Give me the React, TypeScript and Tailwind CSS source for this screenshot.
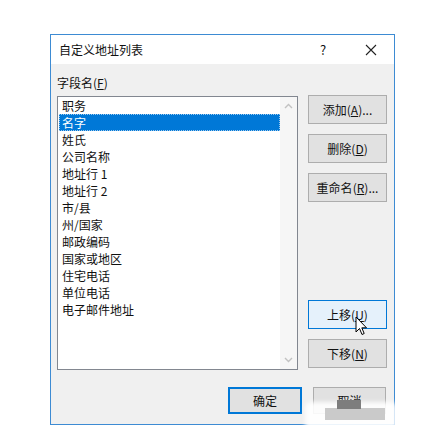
import React from "react";

const items = [
  "职务",
  "名字",
  "姓氏",
  "公司名称",
  "地址行 1",
  "地址行 2",
  "市/县",
  "州/国家",
  "邮政编码",
  "国家或地区",
  "住宅电话",
  "单位电话",
  "电子邮件地址",
];

const font = { fontFamily: '"Noto Sans CJK SC", "Liberation Sans", sans-serif' };

function Btn({ label, u, after = "", cls = "" }: { label: string; u: string; after?: string; cls?: string }) {
  return (
    <div
      className={`h-[29px] w-[79px] flex items-center justify-center border text-[12px] text-[#111] ${cls || "border-[#adadad] bg-[#e1e1e1]"}`}
    >
      {label}(<span className="underline">{u}</span>){after}
    </div>
  );
}

export default function App() {
  return (
    <div className="relative w-[436px] h-[445px] bg-white overflow-hidden" style={font}>
      <div className="pt-[34px] pl-[50px]">
        <div className="w-[345px] h-[391px] border border-[#3d8bd3] bg-[#f0f0f0] flex flex-col">
          <div className="h-[29px] bg-white flex items-center pl-[8px] text-[12px] text-[#111] leading-none">
            <span className="flex-1">自定义地址列表</span>
            <span className="w-[10px] text-[13px]">?</span>
            <span className="ml-[34px] mr-[16px] w-[14px] flex items-center justify-center">
              <svg width="12" height="12" viewBox="0 0 12 12">
                <path d="M1 1L11 11M11 1L1 11" stroke="#222" strokeWidth="1.1" />
              </svg>
            </span>
          </div>
          <div className="flex-1 flex flex-col px-[6px] pt-[12px] pb-[10px]">
            <div className="h-[14px] text-[12px] leading-[14px] text-[#111]">
              字段名(<span className="underline">F</span>)
            </div>
            <div className="flex mt-[6px] gap-[10px]">
              <div className="w-[241px] h-[274px] border border-[#828790] bg-white flex">
                <div className="w-[222px] pl-[1px]">
                  {items.map((t, i) =>
                    i === 1 ? (
                      <div
                        key={i}
                        className="h-[17px] bg-[#0078d7] text-white text-[12px] leading-[15px] pl-[2px] border border-dotted border-[#9cc8ee]"
                      >
                        {t}
                      </div>
                    ) : (
                      <div key={i} className="h-[17px] text-[12px] leading-[17px] pl-[3px] text-[#111]">
                        {t}
                      </div>
                    )
                  )}
                </div>
                <div className="flex-1 bg-[#f6f6f6] flex flex-col justify-between items-center py-[6px]">
                  <svg width="9" height="6" viewBox="0 0 9 6">
                    <path d="M1 5L4.5 1.5L8 5" stroke="#c2c2c2" strokeWidth="1.4" fill="none" />
                  </svg>
                  <svg width="9" height="6" viewBox="0 0 9 6">
                    <path d="M1 1L4.5 4.5L8 1" stroke="#c2c2c2" strokeWidth="1.4" fill="none" />
                  </svg>
                </div>
              </div>
              <div className="flex flex-col justify-between mt-[-1px] h-[274px]">
                <div className="flex flex-col gap-[10px]">
                  <Btn label="添加" u="A" after="..." />
                  <Btn label="删除" u="D" />
                  <Btn label="重命名" u="R" after="..." />
                </div>
                <div className="flex flex-col gap-[10px] mb-[1px]">
                  <Btn label="上移" u="U" cls="border-[#0078d7] bg-[#e5f1fb]" />
                  <Btn label="下移" u="N" />
                </div>
              </div>
            </div>
            <div className="mt-auto flex justify-end gap-[11px] pr-[2px]">
              <div className="w-[74px] h-[27px] border-2 border-[#0078d7] bg-[#e1e1e1] flex items-center justify-center text-[12px] text-[#111]">
                确定
              </div>
              <div className="w-[73px] h-[27px] border border-[#adadad] bg-[#e1e1e1] flex items-center justify-center text-[12px] text-[#111]">
                取消
              </div>
            </div>
          </div>
        </div>
      </div>
      {/* watermark blot */}
      <div className="absolute left-[305px] top-[402px] w-[92px] h-[30px] bg-white/90 blur-[2px] rounded-[6px]" />
      <div className="absolute left-[325px] top-[408px] w-[60px] h-[12px] bg-[#cacaca]" />
      <div className="absolute left-[337px] top-[400px] w-[24px] h-[9px] bg-[#7d7d7d]" />
      {/* cursor */}
      <svg className="absolute left-[355px] top-[316px]" width="13" height="20" viewBox="0 0 13 20">
        <path d="M1 1L1 16L4.5 12.5L7 18.5L9.2 17.5L6.8 11.8L11.5 11.8Z" fill="white" stroke="black" strokeWidth="1" strokeLinejoin="round" />
      </svg>
    </div>
  );
}
